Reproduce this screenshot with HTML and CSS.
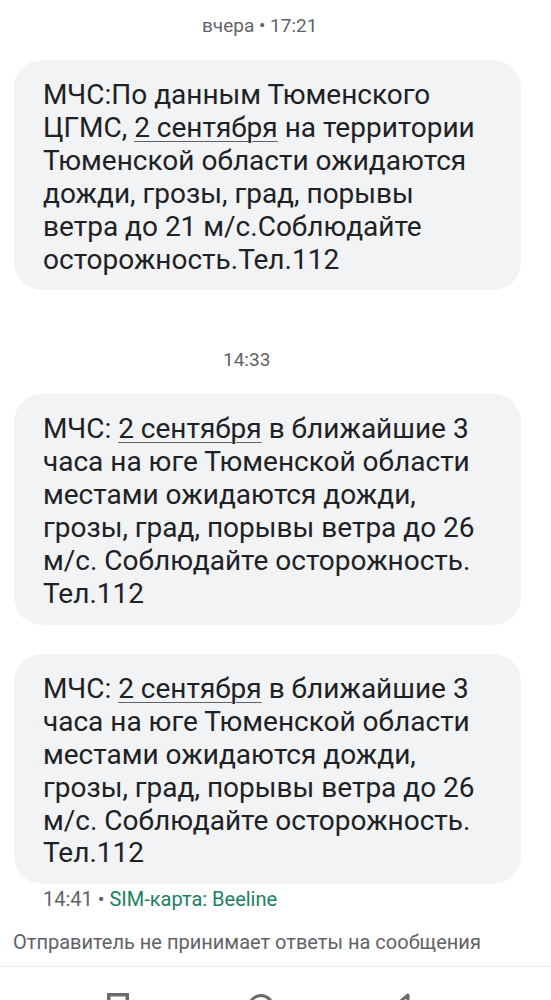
FILE: index.html
```html
<!DOCTYPE html>
<html lang="ru">
<head>
<meta charset="utf-8">
<link rel="stylesheet" href="styles.css">
</head>
<body>
<div class="thread">
  <div class="stamp stamp-first">вчера • 17:21</div>
  <div class="bubble">МЧС:По данным Тюменского ЦГМС, <span class="link">2 сентября</span> на территории Тюменской области ожидаются дожди, грозы, град, порывы ветра до 21 м/с.Соблюдайте осторожность.Тел.112</div>
  <div class="stamp stamp-mid">14:33</div>
  <div class="bubble">МЧС: <span class="link">2 сентября</span> в ближайшие 3 часа на юге Тюменской области местами ожидаются дожди, грозы, град, порывы ветра до 26 м/с. Соблюдайте осторожность. Тел.112</div>
  <div class="bubble bubble-next">МЧС: <span class="link">2 сентября</span> в ближайшие 3 часа на юге Тюменской области местами ожидаются дожди, грозы, град, порывы ветра до 26 м/с. Соблюдайте осторожность. Тел.112</div>
  <div class="meta">14:41 • <span class="sim">SIM-карта: Beeline</span></div>
  <div class="notice">Отправитель не принимает ответы на сообщения</div>
</div>
<div class="divider"></div>
<nav class="navbar">
  <svg class="nav-icon" width="22" height="22" viewBox="0 0 22 22"><rect x="1.75" y="1.75" width="18.5" height="18.5" fill="none" stroke="#6b6b6b" stroke-width="3.5"/></svg>
  <svg class="nav-icon" width="28" height="28" viewBox="0 0 28 28"><circle cx="14" cy="14" r="11.5" fill="none" stroke="#6b6b6b" stroke-width="3"/><circle cx="14" cy="14" r="6" fill="none" stroke="#6b6b6b" stroke-width="2"/></svg>
  <svg class="nav-icon" width="22" height="24" viewBox="0 0 22 24"><path d="M15 2 L3 12 L15 22 Z" fill="none" stroke="#6b6b6b" stroke-width="3" stroke-linejoin="round"/></svg>
</nav>
</body>
</html>
```
FILE: styles.css
```css
html, body {
  margin: 0;
  padding: 0;
  background: #ffffff;
}
body {
  width: 551px;
  height: 1000px;
  overflow: hidden;
  font-family: Roboto, "Noto Sans", "Liberation Sans", sans-serif;
  color: #202124;
}
.thread {
  display: flex;
  flex-direction: column;
}
.stamp {
  align-self: flex-start;
  font-size: 19px;
  line-height: 24px;
  color: #5f6368;
}
.stamp-first {
  margin-top: 14px;
  margin-bottom: 22px;
  margin-left: 202px;
}
.stamp-mid {
  margin-top: 58px;
  margin-bottom: 22px;
  margin-left: 223px;
}
.bubble {
  margin-left: 14px;
  width: 507px;
  box-sizing: border-box;
  padding: 19px 38px 14px 29px;
  background: #f1f3f4;
  border-radius: 28px;
  font-size: 28px;
  line-height: 32.9px;
  color: #202124;
}
.bubble-next {
  margin-top: 29px;
}
.link {
  text-decoration: underline;
  text-decoration-thickness: 1px;
  text-underline-offset: 4px;
  text-decoration-color: #5f6368;
}
.meta {
  margin-top: 3px;
  padding-left: 43px;
  font-size: 20px;
  line-height: 24px;
  color: #5f6368;
}
.sim {
  color: #1a7f5e;
}
.notice {
  margin-top: 19px;
  padding-left: 13px;
  font-size: 20px;
  line-height: 24px;
  color: #5f6368;
}
.divider {
  margin-top: 12px;
  height: 1px;
  background: #ebebeb;
}
.navbar {
  display: flex;
  justify-content: space-between;
  align-items: flex-start;
  padding: 26px 136px 0 107px;
}
```
